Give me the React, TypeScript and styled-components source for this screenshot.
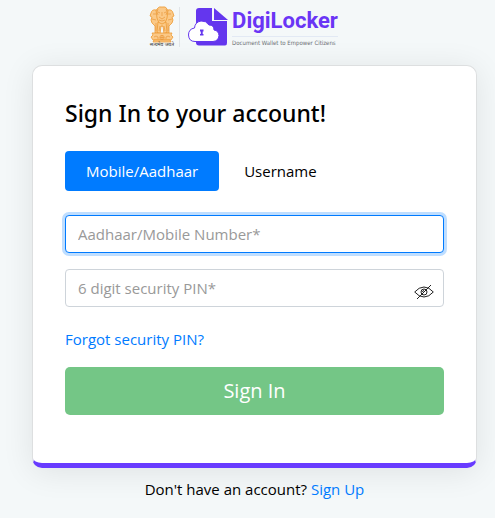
import React, { useState } from "react";
import styled, { createGlobalStyle, css } from "styled-components";

const GlobalStyle = createGlobalStyle`
  *, *::before, *::after { box-sizing: border-box; }
  body {
    margin: 0;
    background: #f4f8f9;
    color: #000;
    font-family: "Open Sans", "Noto Sans", sans-serif;
    font-size: 15px;
    font-weight: 400;
    line-height: 24px;
  }
  button, input { font: inherit; }
`;

const Page = styled.div`
  display: flex;
  flex-direction: column;
  min-height: 100vh;
  padding: 6px 18px 0 32px;
`;

const Header = styled.header`
  display: flex;
  justify-content: center;
  height: 43px;
  margin: 0 22px 16px 0;
`;

const Emblem = styled.svg`
  width: 26px;
  height: 42px;
  flex: none;
`;

const Divider = styled.span`
  width: 1px;
  height: 40px;
  margin: 1px 8px 0 4px;
  background: #e1e5e8;
`;

const CloudMark = styled.svg`
  width: 42px;
  height: 40px;
  margin-top: 1px;
  flex: none;
`;

const Brand = styled.div`
  display: flex;
  flex-direction: column;
  margin-left: 2px;
`;

const BrandName = styled.span`
  border-bottom: 1px solid #e2e9f4;
  color: #6a35f5;
  font: 700 22px/30px Roboto, sans-serif;
`;

const Tagline = styled.span`
  color: #6d7075;
  font: 400 6px/11px "DejaVu Sans Condensed", "Liberation Sans", sans-serif;
  white-space: nowrap;
`;

const Card = styled.main`
  padding: 30px 32px 48px;
  border: 1px solid #dddfe0;
  border-bottom: 5px solid #683bff;
  border-radius: 10px;
  background: #fff;
  box-shadow: 0 4px 32px rgba(0, 0, 0, 0.09);
`;

const Title = styled.h1`
  margin: 0 0 21px;
  font-family: "Noto Sans", sans-serif;
  font-size: 23px;
  font-weight: 500;
  line-height: 34px;
`;

const Tabs = styled.div`
  display: flex;
  gap: 4px;
  margin-bottom: 24px;
`;

const Tab = styled.button<{ $active: boolean }>`
  height: 40px;
  padding: 0 21px;
  border: 0;
  border-radius: 4px;
  background: ${({ $active }) => ($active ? "#007bff" : "transparent")};
  color: ${({ $active }) => ($active ? "#fff" : "#000")};
  cursor: pointer;
`;

const Form = styled.form`
  display: flex;
  flex-direction: column;
`;

const Field = styled.div`
  position: relative;
  margin-bottom: 16px;
`;

const TextInput = styled.input<{ $highlighted?: boolean }>`
  display: block;
  width: 100%;
  height: 38px;
  padding: 0 12px;
  border: 1px solid #ced4da;
  border-radius: 4px;
  background: #fff;
  color: #495057;
  outline: 0;
  &::placeholder { color: #999; opacity: 1; }
  ${({ $highlighted }) =>
    $highlighted &&
    css`
      border-color: #007bff;
      box-shadow: 0 0 0 3px #bfdeff;
    `}
`;

const RevealButton = styled.button`
  position: absolute;
  top: 13px;
  right: 10px;
  display: flex;
  padding: 0;
  border: 0;
  background: transparent;
  cursor: pointer;
`;

const Link = styled.a`
  color: #007bff;
  text-decoration: none;
`;

const ForgotRow = styled.div`
  margin: 4px 0 16px;
`;

const SubmitButton = styled.button`
  height: 48px;
  border: 0;
  border-radius: 5px;
  background: #74c686;
  color: #fff;
  font-size: 20px;
  font-weight: 400;
`;

const SignUp = styled.p`
  margin: 9px 0 0;
  text-align: center;
`;

function NationalEmblem() {
  return (
    <Emblem viewBox="0 0 26 42" role="img" aria-label="National emblem">
      <g fill="#fbc987" stroke="#ec9b35" strokeWidth=".8" strokeLinejoin="round">
        <path d="M8 3Q10 0 13 1Q17 0 18 3L20 6 19 14 17 20H9L7 14 6 6Z" />
        <path d="M7 4Q3 3 2 7L1 10 3 11Q1 14 3 17L6 20 6 27H10V17L8 12Z" />
        <path d="M19 4Q23 3 24 7L25 10 23 11Q25 14 23 17L20 20V27H16V17L18 12Z" />
        <path d="M9 16 8 26 11 28 12 20H14L15 28 18 26 17 16 13 18Z" />
        <path d="M3 27H23L22 29 24 31 22 34H4L2 31 4 29Z" />
        <path d="M5 34H21L22 36H4Z" />
      </g>
      <g fill="none" stroke="#e8973a" strokeWidth=".7">
        <path d="M9 6 11 7M15 7 17 6M13 6V10M10 11 13 13 16 11M10 14 13 15 16 14M4 8 7 8M22 8 19 8M3 13 7 14M23 13 19 14M7 17 7 25M19 17V25M11 20 10 25M15 20 16 25" />
        <circle cx="13" cy="31.5" r="2.2" />
        <path d="M11 31.5H15M13 29V34M5 31Q7 29 9 31V33M21 31Q19 29 17 31V33M9 3Q7 6 9 9M17 3Q19 6 17 9" />
      </g>
      <text x="13" y="40" textAnchor="middle" fontSize="5" fontWeight="400" fill="#333">सत्यमेव जयते</text>
    </Emblem>
  );
}

function DocumentCloud() {
  return (
    <CloudMark viewBox="0 0 42 40" aria-hidden="true">
      <path d="M11 1H24V14H39V36Q39 38.500 37 38.500H11Q8 38.500 8 35.500V4Q8 1 11 1Z" fill="#6436ee" />
      <path d="M26 1 40 13H26Z" fill="#6436ee" />
      <path
        d="M7 34.500H25Q30.500 34 31 28.500Q30.500 23.500 26 23Q26 18 21 18Q18 13.500 13 14Q7 15 6.500 21Q.5 22 .5 28Q.8 34.500 7 34.500Z"
        fill="#fff" stroke="#6436ee" strokeWidth="1"
      />
      <path d="M12 22.500H15.500V24.500H14.700V27H15.500V28.500H12V27H12.800V24.500H12Z" fill="#6436ee" />
    </CloudMark>
  );
}

function HiddenEye() {
  return (
    <svg width="20" height="20" viewBox="0 0 20 20" fill="none" stroke="#222" strokeWidth="1" aria-hidden="true">
      <path d="M.7 10Q5 5 10 5T19.300 10Q15 15 10 15T.7 10Z" />
      <circle cx="10" cy="10" r="3" />
      <path d="M8.500 10A1.500 1.500 0 0 1 10 8.500M17 3 3 17" />
    </svg>
  );
}

export default function App() {
  const [mode, setMode] = useState<"mobile" | "username">("mobile");
  const [revealed, setRevealed] = useState(false);

  return (
    <>
      <GlobalStyle />
      <Page>
        <Header>
          <NationalEmblem />
          <Divider />
          <DocumentCloud />
          <Brand>
            <BrandName>DigiLocker</BrandName>
            <Tagline>Document Wallet to Empower Citizens</Tagline>
          </Brand>
        </Header>
        <Card>
          <Title>Sign In to your account!</Title>
          <Tabs>
            <Tab type="button" aria-pressed={mode === "mobile"} $active={mode === "mobile"} onClick={() => setMode("mobile")}>
              Mobile/Aadhaar
            </Tab>
            <Tab type="button" aria-pressed={mode === "username"} $active={mode === "username"} onClick={() => setMode("username")}>
              Username
            </Tab>
          </Tabs>
          <Form onSubmit={(event) => event.preventDefault()}>
            <Field>
              <TextInput
                $highlighted
                type="text"
                aria-label={mode === "mobile" ? "Aadhaar/Mobile Number" : "Username"}
                placeholder={mode === "mobile" ? "Aadhaar/Mobile Number*" : "Username*"}
              />
            </Field>
            <Field>
              <TextInput type={revealed ? "text" : "password"} aria-label="6 digit security PIN" placeholder="6 digit security PIN*" />
              <RevealButton type="button" aria-label="Show PIN" aria-pressed={revealed} onClick={() => setRevealed(!revealed)}>
                <HiddenEye />
              </RevealButton>
            </Field>
            <ForgotRow>
              <Link href="#forgot">Forgot security PIN?</Link>
            </ForgotRow>
            <SubmitButton type="submit">Sign In</SubmitButton>
          </Form>
        </Card>
        <SignUp>
          Don't have an account? <Link href="#signup">Sign Up</Link>
        </SignUp>
      </Page>
    </>
  );
}
